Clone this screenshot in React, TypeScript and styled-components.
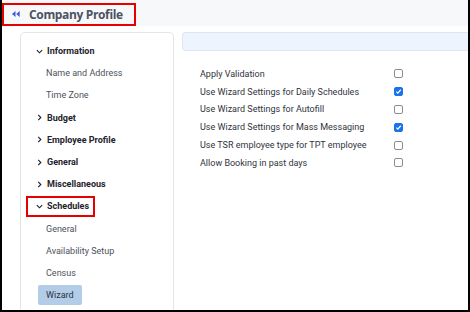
import React from "react";
import styled, { createGlobalStyle } from "styled-components";

const Global = createGlobalStyle`
  html, body { margin: 0; padding: 0; background: #ffffff; }
  body { font-family: Roboto, "Liberation Sans", Arial, sans-serif; }
  * { box-sizing: border-box; }
`;

const Frame = styled.div`
  width: 470px;
  height: 312px;
  border: 2px solid #000;
  border-top: none;
  overflow: hidden;
  background: #ffffff;
  display: flex;
  flex-direction: column;
`;

const Header = styled.div`
  height: 26px;
  flex: none;
  background: #f7f8fa;
  padding-top: 2px;
`;

const TitleBox = styled.div`
  display: inline-flex;
  align-items: center;
  width: 134px;
  height: 23px;
  border: 2px solid #e60000;
  padding-left: 8px;
  gap: 9px;
  white-space: nowrap;
`;

const Title = styled.span`
  font-family: "Open Sans", "Noto Sans", sans-serif;
  font-weight: 700;
  font-size: 12px;
  color: #4b5262;
  letter-spacing: -0.35px;
`;

const Body = styled.div`
  flex: 1;
  display: flex;
  gap: 8px;
  padding: 6px 0 0 18px;
  min-height: 0;
`;

const Sidebar = styled.div`
  width: 154px;
  flex: none;
  background: #fff;
  border: 1px solid #e3e5e8;
  border-bottom: none;
  border-radius: 5px 5px 0 0;
  padding-top: 7px;
  display: flex;
  flex-direction: column;
`;

const Row = styled.div`
  height: 22.2px;
  display: flex;
  align-items: center;
`;

const SectionHead = styled.div<{ $marked?: boolean }>`
  display: inline-flex;
  align-items: center;
  height: 21px;
  margin-left: 5px;
  padding: 0 4px 0 8px;
  border: 2px solid ${(p) => (p.$marked ? "#e60000" : "transparent")};
  gap: 4px;
  font-size: 9px;
  font-weight: 700;
  color: #1f232b;
  white-space: nowrap;
`;

const SubItem = styled.div<{ $active?: boolean }>`
  display: inline-flex;
  align-items: center;
  height: 20px;
  margin-left: 17px;
  padding: 0 8px;
  border-radius: 2px;
  background: ${(p) => (p.$active ? "#b3cce8" : "transparent")};
  font-size: 9px;
  color: ${(p) => (p.$active ? "#2b3340" : "#4d525a")};
  white-space: nowrap;
`;

const Main = styled.div`
  flex: 1;
  display: flex;
  flex-direction: column;
  min-width: 0;
`;

const InfoBar = styled.div`
  height: 19px;
  background: #edf4fd;
  border: 1px solid #dfe6ef;
  border-right: none;
  border-radius: 4px 0 0 4px;
`;

const Settings = styled.div`
  margin-top: 14px;
  padding-left: 18px;
  display: flex;
  flex-direction: column;
`;

const SettingRow = styled.label`
  height: 17.8px;
  display: flex;
  align-items: center;
`;

const SettingLabel = styled.span`
  width: 194px;
  font-size: 9px;
  color: #2f343c;
  white-space: nowrap;
`;

const Box = styled.span<{ $checked?: boolean }>`
  width: 9px;
  height: 9px;
  border-radius: 2px;
  border: 1px solid ${(p) => (p.$checked ? "#1a73e8" : "#8a8d92")};
  background: ${(p) => (p.$checked ? "#1a73e8" : "#fff")};
  display: inline-flex;
  align-items: center;
  justify-content: center;
`;

const Chevron = ({ open }: { open: boolean }) => (
  <svg width="7" height="7" viewBox="0 0 8 8" style={{ flex: "none" }}>
    {open ? (
      <path d="M1 2.5 L4 5.5 L7 2.5" fill="none" stroke="#1f232b" strokeWidth="1.3" />
    ) : (
      <path d="M2.5 1 L5.5 4 L2.5 7" fill="none" stroke="#1f232b" strokeWidth="1.3" />
    )}
  </svg>
);

const BackIcon = () => (
  <svg width="8" height="6" viewBox="0 0 8 6" style={{ flex: "none" }}>
    <path d="M0 3 L3.5 0 L3.5 6 Z" fill="#4459d6" />
    <path d="M4.2 3 L7.7 0 L7.7 6 Z" fill="#4459d6" />
  </svg>
);

const Check = () => (
  <svg width="7" height="7" viewBox="0 0 8 8">
    <path d="M1.5 4.2 L3.2 5.9 L6.6 2" fill="none" stroke="#fff" strokeWidth="1.4" />
  </svg>
);

type NavEntry =
  | { kind: "head"; label: string; open: boolean; marked?: boolean }
  | { kind: "sub"; label: string; active?: boolean };

const nav: NavEntry[] = [
  { kind: "head", label: "Information", open: true },
  { kind: "sub", label: "Name and Address" },
  { kind: "sub", label: "Time Zone" },
  { kind: "head", label: "Budget", open: false },
  { kind: "head", label: "Employee Profile", open: false },
  { kind: "head", label: "General", open: false },
  { kind: "head", label: "Miscellaneous", open: false },
  { kind: "head", label: "Schedules", open: true, marked: true },
  { kind: "sub", label: "General" },
  { kind: "sub", label: "Availability Setup" },
  { kind: "sub", label: "Census" },
  { kind: "sub", label: "Wizard", active: true },
];

const settings = [
  { label: "Apply Validation", checked: false },
  { label: "Use Wizard Settings for Daily Schedules", checked: true },
  { label: "Use Wizard Settings for Autofill", checked: false },
  { label: "Use Wizard Settings for Mass Messaging", checked: true },
  { label: "Use TSR employee type for TPT employee", checked: false },
  { label: "Allow Booking in past days", checked: false },
];

export default function App() {
  return (
    <>
      <Global />
      <Frame>
        <Header>
          <TitleBox>
            <BackIcon />
            <Title>Company Profile</Title>
          </TitleBox>
        </Header>
        <Body>
          <Sidebar>
            {nav.map((n, i) => (
              <Row key={i}>
                {n.kind === "head" ? (
                  <SectionHead $marked={n.marked}>
                    <Chevron open={n.open} />
                    {n.label}
                  </SectionHead>
                ) : (
                  <SubItem $active={n.active}>{n.label}</SubItem>
                )}
              </Row>
            ))}
          </Sidebar>
          <Main>
            <InfoBar />
            <Settings>
              {settings.map((s) => (
                <SettingRow key={s.label}>
                  <SettingLabel>{s.label}</SettingLabel>
                  <Box $checked={s.checked}>{s.checked && <Check />}</Box>
                </SettingRow>
              ))}
            </Settings>
          </Main>
        </Body>
      </Frame>
    </>
  );
}
